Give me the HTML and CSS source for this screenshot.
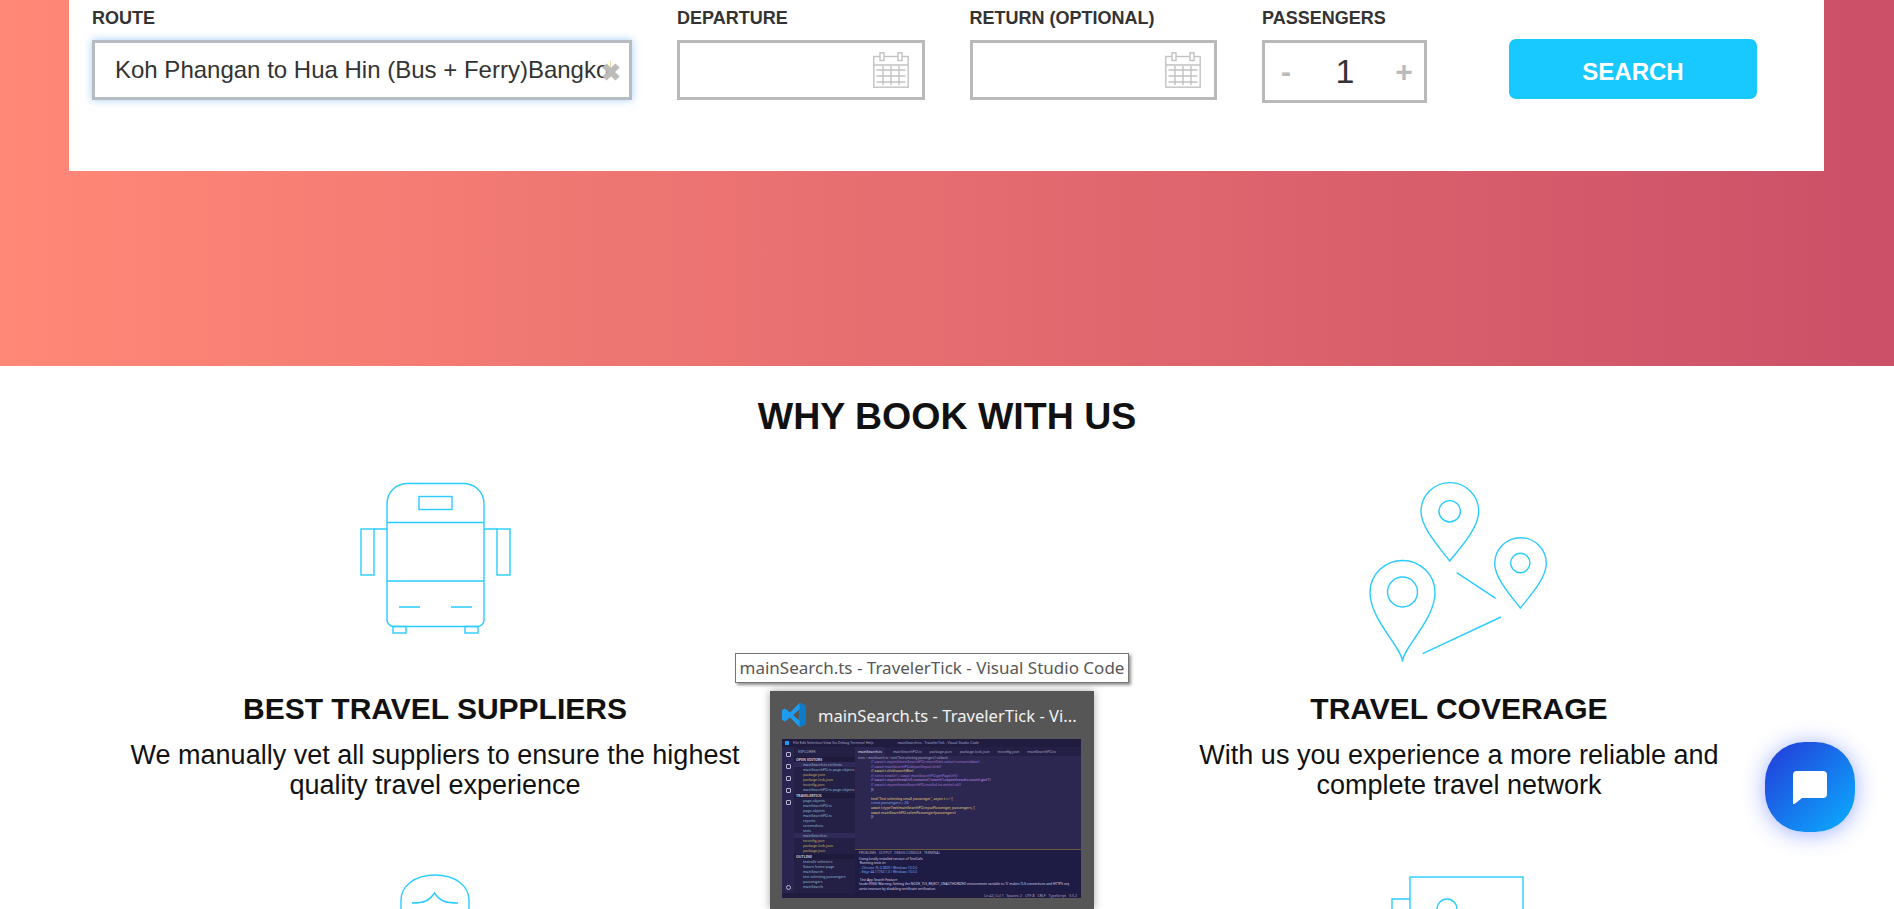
FILE: index.html
```html
<!DOCTYPE html>
<html lang="en">
  <head>
    <meta charset="UTF-8" />
    <title>Why book with us</title>
    <link rel="stylesheet" href="styles.css">
  </head>
  <body>
    <section class="hero">
      <form class="search-card">
        <div class="field field-route">
          <label>ROUTE</label>
          <div class="box box-focus">
            <span class="route-text">Koh Phangan to Hua Hin (Bus + Ferry)Bangkok</span>
            <svg class="clear-icon" viewBox="0 0 18 18"><path d="M2.500 2.500 15.500 15.500M15.500 2.500 2.500 15.500" /></svg>
          </div>
        </div>
        <div class="field field-date">
          <label>DEPARTURE</label>
          <div class="box">
            <svg class="cal-icon" viewBox="0 0 36 36"><use href="#cal" /></svg>
          </div>
        </div>
        <div class="field field-date">
          <label>RETURN (OPTIONAL)</label>
          <div class="box">
            <svg class="cal-icon" viewBox="0 0 36 36"><use href="#cal" /></svg>
          </div>
        </div>
        <div class="field field-pax">
          <label>PASSENGERS</label>
          <div class="box box-pax">
            <span class="step">-</span>
            <span class="pax-count">1</span>
            <span class="step">+</span>
          </div>
        </div>
        <button class="search-btn" type="button">SEARCH</button>
      </form>
    </section>

    <!-- shared calendar symbol -->
    <svg class="defs" width="0" height="0">
      <symbol id="cal" viewBox="0 0 36 36">
        <rect class="cal-line" x=".8" y="4.500" width="34.400" height="30.700" />
        <path class="cal-line" d="M.8 13H35.200" />
        <rect class="cal-fill" x="7" y=".8" width="4" height="7.700" />
        <rect class="cal-fill" x="25" y=".8" width="4" height="7.700" />
        <path class="cal-line" d="M3.500 18H32.500M3.500 24H32.500M3.500 30H32.500M10 14V33M18 14V33M26 14V33" />
      </symbol>
    </svg>

    <section class="why">
      <h1>WHY BOOK WITH US</h1>
      <div class="why-grid">
        <article class="feature">
          <svg class="feature-icon" viewBox="-15 0 220 200">
            <path d="M47 34C47 22 56 13.500 68 13.500H123C135 13.500 144 22 144 34V150C144 153.500 141 156.500 138 156.500H53C50 156.500 47 153.500 47 150Z" />
            <rect x="79" y="26.500" width="33" height="13" />
            <path d="M47 52.500H144M47 111H144M34 59H47M144 59H157M59 137H80M111 137H132" />
            <rect x="21" y="59" width="13" height="46" />
            <rect x="157" y="59" width="13" height="46" />
            <rect x="53" y="156.500" width="13" height="6.500" />
            <rect x="125" y="156.500" width="13" height="6.500" />
          </svg>
          <h3>BEST TRAVEL SUPPLIERS</h3>
          <p>We manually vet all suppliers to ensure the highest quality travel experience</p>
        </article>
        <article class="feature">
          <svg class="feature-icon" viewBox="-1 0 220 200">
            <path d="M99.700 91C90 78 71 58 71 41.500A28.800 28.800 0 0 1 128.700 41.500C128.700 58 110 78 99.700 91Z" />
            <circle cx="99.700" cy="41.300" r="10.700" />
            <path d="M170.300 138C161 126 144.700 108 144.700 93.500A25.800 25.800 0 0 1 196.300 93.500C196.300 108 180 126 170.300 138Z" />
            <circle cx="170.300" cy="93" r="9.700" />
            <path d="M52.500 191.700C52.500 178 20 150 20 122.500A32.500 32 0 0 1 85 122.500C85 150 52.500 178 52.500 191.700Z" />
            <circle cx="52.500" cy="122" r="15" />
            <path d="M106.700 102.700 145.700 128.300M151 147 72.700 183.700" />
          </svg>
          <h3>TRAVEL COVERAGE</h3>
          <p>With us you experience a more reliable and complete travel network</p>
        </article>
        <article class="feature">
          <svg class="feature-icon" viewBox="-15 0 220 200">
            <path d="M61 42C60 26 75 15 95 15C115 15 130 26 129 42V90M61 42V90" />
            <path d="M72 43C84 43 89 41 94.500 33C100 41 105 43 118 43" />
          </svg>
        </article>
        <article class="feature">
          <svg class="feature-icon" viewBox="-1 0 220 200">
            <rect x="60" y="17" width="113" height="100" />
            <path d="M60 39H42V120H60" />
            <circle cx="97" cy="49" r="10" />
          </svg>
        </article>
      </div>
    </section>

    <!-- taskbar preview that sat over the page when the shot was taken -->
    <div class="os-tooltip">mainSearch.ts - TravelerTick - Visual Studio Code</div>
    <div class="thumb">
      <div class="thumb-head">
        <svg class="vscode-logo" viewBox="0 0 24 24">
          <path class="logo-a" d="M17.500 0 24 3V21L17.500 24 8 14.500 3 18.500 0 17V7L3 5.500 8 9.500ZM17.500 6.500 11 12 17.500 17.500Z" />
          <path class="logo-b" d="M17.500 0 24 3V21L17.500 24V17.500L17.500 6.500Z" />
        </svg>
        <span class="thumb-title">mainSearch.ts - TravelerTick - Vi...</span>
      </div>
      <div class="vs">
        <div class="vs-bar">
          <i class="vs-mark"></i>
          <span class="vs-menu">File Edit Selection View Go Debug Terminal Help</span>
          <span class="vs-name">mainSearch.ts - TravelerTick - Visual Studio Code</span>
        </div>
        <div class="vs-main">
          <div class="vs-activity">
            <i></i><i></i><i></i><i></i><i></i>
            <i class="vs-gear"></i>
          </div>
          <div class="vs-side">
            <div class="vs-head">EXPLORER</div>
            <div class="vs-group">OPEN EDITORS</div>
            <div class="vs-file vs-active">mainSearch.ts src/tests</div>
            <div class="vs-file">mainSearchPO.ts page-objects</div>
            <div class="vs-file vs-json">package.json</div>
            <div class="vs-file vs-json">package-lock.json</div>
            <div class="vs-file vs-json">tsconfig.json</div>
            <div class="vs-file">mainSearchPO.ts page-objects</div>
            <div class="vs-group">TRAVELERTICK</div>
            <div class="vs-file">page-objects</div>
            <div class="vs-file">mainSearchPO.ts</div>
            <div class="vs-file">page-objects</div>
            <div class="vs-file">mainSearchPO.ts</div>
            <div class="vs-file">reports</div>
            <div class="vs-file">screenshots</div>
            <div class="vs-file">tests</div>
            <div class="vs-file vs-active">mainSearch.ts</div>
            <div class="vs-file vs-json">tsconfig.json</div>
            <div class="vs-file vs-json">package-lock.json</div>
            <div class="vs-file vs-json">package.json</div>
            <div class="vs-group">OUTLINE</div>
            <div class="vs-file">testcafe selectors</div>
            <div class="vs-file">fixture home page</div>
            <div class="vs-file">mainSearch</div>
            <div class="vs-file">test selecting passengers</div>
            <div class="vs-file">passengers</div>
            <div class="vs-file">mainSearch</div>
          </div>
          <div class="vs-right">
            <div class="vs-tabs">
              <span class="vs-tab-on">mainSearch.ts</span><span>mainSearchPO.ts</span><span>package.json</span><span>package-lock.json</span><span>tsconfig.json</span><span>mainSearchPO.ts</span>
            </div>
            <div class="vs-crumbs">tests &gt; mainSearch.ts &gt; test('Test selecting passengers') callback</div>
            <div class="vs-code">
              <div class="c-com">  // await t.expect(mainSearchPO.returnDate.value).contains(date)</div>
              <div class="c-com">  // await mainSearchPO.departInput.click()</div>
              <div class="c-yel">  // await t.click(searchBtn)</div>
              <div class="c-com">  // const newUrl = await mainSearchPO.getPageUrl()</div>
              <div class="c-pur">  // await t.expect(newUrl).contains('/search').expect(results.count).gte(1)</div>
              <div class="c-com">  // await t.expect(mainSearchPO.resultsList.exists).ok()</div>
              <div class="c-txt">})</div>
              <div class="c-txt">&nbsp;</div>
              <div class="c-yel">test('Test selecting small passenger', async t =&gt; {</div>
              <div class="c-blu">    const passengers = 26</div>
              <div class="c-yel">    await t.typeText(mainSearchPO.inputPassenger, passengers, {</div>
              <div class="c-yel">    await mainSearchPO.selectPassenger(passengers)</div>
              <div class="c-txt">})</div>
            </div>
            <div class="vs-panel">
              <div class="vs-panel-tabs">PROBLEMS &nbsp; OUTPUT &nbsp; DEBUG CONSOLE &nbsp; TERMINAL</div>
              <div>Using locally installed version of TestCafe.</div>
              <div>&nbsp;Running tests in:</div>
              <div class="c-blu">&nbsp;- Chrome 76.0.3809 / Windows 10.0.0</div>
              <div class="c-blu">&nbsp;- Edge 44.17763.1.0 / Windows 10.0.0</div>
              <div>&nbsp;</div>
              <div>&nbsp;Test App Search Feature</div>
              <div>(node:9936) Warning: Setting the NODE_TLS_REJECT_UNAUTHORIZED environment variable to '0' makes TLS connections and HTTPS req</div>
              <div>uests insecure by disabling certificate verification.</div>
            </div>
          </div>
        </div>
        <div class="vs-status">Ln 42, Col 1 &nbsp; Spaces: 2 &nbsp; UTF-8 &nbsp; CRLF &nbsp; TypeScript &nbsp; 3.5.2</div>
      </div>
    </div>

    <button class="chat-btn" type="button" aria-label="Chat">
      <svg viewBox="0 0 34 33"><path d="M4 0H30A4 4 0 0 1 34 4V23A4 4 0 0 1 30 27H9L1.500 33A1 1 0 0 1 0 32V4A4 4 0 0 1 4 0Z" /></svg>
    </button>
  </body>
</html>
```

FILE: styles.css
```css
html,
body {
  height: 909px;
  overflow: hidden;
}

body {
  margin: 0;
  font-family: "Liberation Sans", Arial, sans-serif;
  color: #111;
  background: #fff;
}

.hero {
  height: 366px;
  background: linear-gradient(90deg, #ff8877 0%, #cb5068 100%);
}

.search-card {
  display: flex;
  gap: 45px;
  box-sizing: border-box;
  height: 171px;
  margin: 0 70px 0 69px;
  padding: 0 23px;
  background: #fff;
}

.field label {
  display: block;
  height: 40px;
  padding-top: 9px;
  box-sizing: border-box;
  font-size: 18px;
  font-weight: bold;
  line-height: 19px;
  white-space: nowrap;
  color: #333;
}

.field-route {
  width: 540px;
}

.field-date {
  width: 247.500px;
}

.field-pax {
  width: 165px;
}

.box {
  position: relative;
  display: flex;
  align-items: center;
  justify-content: flex-end;
  box-sizing: border-box;
  height: 60px;
  border: 3px solid #b9b9b9;
  background: #fff;
}

.box-focus {
  justify-content: flex-start;
  border-color: #b6bcc2;
  box-shadow: 0 0 8px rgba(90, 165, 240, 0.55);
}

.route-text {
  overflow: hidden;
  box-sizing: border-box;
  width: 516px;
  padding-left: 20px;
  font-size: 24px;
  white-space: nowrap;
  color: #333;
}

.clear-icon {
  position: absolute;
  top: 20px;
  right: 9px;
  width: 18px;
  height: 18px;
}

.clear-icon path {
  fill: none;
  stroke: #bbb;
  stroke-width: 6;
}

.cal-icon {
  width: 36px;
  height: 36px;
  margin-right: 13px;
}

.defs {
  position: absolute;
}

.cal-line {
  fill: none;
  stroke: #c2c2c2;
  stroke-width: 1.400;
}

.cal-fill {
  fill: #fff;
  stroke: #c2c2c2;
  stroke-width: 1.400;
}

.box-pax {
  justify-content: space-between;
  height: 63px;
  padding: 0 9px 0 10px;
}

.step {
  width: 22px;
  font-size: 30px;
  font-weight: bold;
  text-align: center;
  color: #bbb;
}

.pax-count {
  font-size: 34px;
  color: #333;
}

.search-btn {
  width: 248px;
  height: 60px;
  margin: 39px 0 0 37px;
  padding: 6px 0 0;
  border: 0;
  border-radius: 7px;
  background: #18c9ff;
  font-family: inherit;
  font-size: 24px;
  font-weight: bold;
  color: #fff;
}

.why {
  overflow: hidden;
  height: 543px;
}

.why h1 {
  margin: 30px 0 33px;
  font-size: 37.500px;
  line-height: 41px;
  text-align: center;
}

.why-grid {
  display: grid;
  grid-template-columns: 620px 620px;
  justify-content: center;
  gap: 60px 404px;
}

.feature {
  text-align: center;
}

.feature-icon {
  display: block;
  width: 220px;
  height: 200px;
  margin: 0 auto 22px;
  fill: none;
  stroke: #2accff;
  stroke-width: 1.400;
}

.feature h3 {
  margin: 0 0 15px;
  font-size: 30px;
  line-height: 33px;
}

.feature p {
  margin: 0;
  font-size: 27px;
  line-height: 30px;
}

/* windows taskbar preview */
.os-tooltip {
  position: absolute;
  top: 653px;
  left: 735px;
  box-sizing: border-box;
  width: 394px;
  height: 30px;
  border: 1px solid #767676;
  background: #fff;
  box-shadow: 2px 2px 3px rgba(0, 0, 0, 0.45);
  font-family: "Noto Sans", "Open Sans", sans-serif;
  font-size: 17px;
  line-height: 27px;
  text-align: center;
  white-space: nowrap;
  color: #575757;
}

.thumb {
  position: absolute;
  top: 691px;
  left: 770px;
  width: 324px;
  height: 218px;
  background: #565656;
  box-shadow: 0 0 8px rgba(0, 0, 0, 0.35);
}

.thumb-head {
  display: flex;
  align-items: center;
  gap: 12px;
  height: 48px;
  padding-left: 12px;
}

.vscode-logo {
  width: 24px;
  height: 24px;
}

.logo-a {
  fill: #1f9cf0;
}

.logo-b {
  fill: #0a7cc9;
}

.thumb-title {
  font-family: "Noto Sans", "Open Sans", sans-serif;
  font-size: 16.600px;
  white-space: nowrap;
  color: #f2f2f2;
}

/* tiny vs code window */
.vs {
  display: flex;
  flex-direction: column;
  overflow: hidden;
  width: 299px;
  height: 159px;
  margin-left: 12px;
  background: #2c2750;
  font-family: "Noto Sans", sans-serif;
  font-size: 3.600px;
  line-height: 5px;
  white-space: nowrap;
  color: #a9a6c6;
}

.vs-bar {
  display: flex;
  flex: none;
  align-items: center;
  gap: 24px;
  height: 8px;
  padding-left: 3px;
  background: #1f1c40;
  line-height: 8px;
}

.vs-mark {
  flex: none;
  width: 4px;
  height: 4px;
  margin-right: -20px;
  background: #1f9cf0;
}

.vs-main {
  display: flex;
  flex: 1;
  min-height: 0;
}

.vs-activity {
  display: flex;
  flex: none;
  flex-direction: column;
  align-items: center;
  gap: 7px;
  width: 12px;
  padding-top: 5px;
  box-sizing: border-box;
  background: #2a2550;
}

.vs-activity i {
  width: 5px;
  height: 5px;
  border: 1px solid #b9b7cf;
  box-sizing: border-box;
  border-radius: 1px;
}

.vs-activity .vs-gear {
  margin-top: auto;
  margin-bottom: 3px;
  border-radius: 50%;
}

.vs-side {
  flex: none;
  overflow: hidden;
  width: 61px;
  background: #231f45;
}

.vs-head {
  height: 9px;
  padding-left: 4px;
  line-height: 9px;
}

.vs-group {
  margin-top: 1px;
  padding-left: 2px;
  background: #1d1a3c;
  font-weight: bold;
  color: #c4c2da;
}

.vs-file {
  padding-left: 9px;
  color: #8fbccc;
}

.vs-json {
  color: #c4b26a;
}

.vs-active {
  background: #2f2a58;
}

.vs-right {
  display: flex;
  flex: 1;
  flex-direction: column;
  min-width: 0;
}

.vs-tabs {
  display: flex;
  flex: none;
  gap: 8px;
  height: 9px;
  background: #231f45;
  line-height: 9px;
}

.vs-tab-on {
  padding: 0 3px;
  background: #2c2750;
  color: #e6e5f2;
}

.vs-crumbs {
  flex: none;
  height: 4px;
  padding-left: 3px;
  font-size: 3px;
  line-height: 4px;
}

.vs-code {
  flex: 1;
  overflow: hidden;
  padding-left: 16px;
  border-bottom: 1px solid #6d5a3d;
  line-height: 4.600px;
}

.c-com {
  color: #a277d8;
}

.c-pur {
  color: #c792ea;
}

.c-yel {
  color: #e2cf7d;
}

.c-blu {
  color: #7aa8f0;
}

.c-txt {
  color: #d6d4e6;
}

.vs-panel {
  flex: none;
  overflow: hidden;
  height: 43px;
  padding: 1px 4px;
  box-sizing: border-box;
  background: #1e1b45;
  font-size: 3.300px;
  line-height: 4.200px;
  color: #d8d6e8;
}

.vs-panel-tabs {
  margin-bottom: 2px;
  color: #a9a7c4;
}

.vs-status {
  flex: none;
  height: 5px;
  padding-right: 4px;
  background: #1f1c40;
  line-height: 5px;
  text-align: right;
}

/* chat bubble */
.chat-btn {
  position: fixed;
  top: 742px;
  left: 1765px;
  display: flex;
  align-items: center;
  justify-content: center;
  width: 90px;
  height: 90px;
  padding: 0;
  border: 0;
  border-radius: 44%;
  background: linear-gradient(135deg, #2438d8 0%, #0ab0ff 100%);
  box-shadow: 0 2px 22px rgba(40, 80, 255, 0.45);
}

.chat-btn svg {
  width: 34px;
  height: 33px;
  fill: #fff;
}
```
